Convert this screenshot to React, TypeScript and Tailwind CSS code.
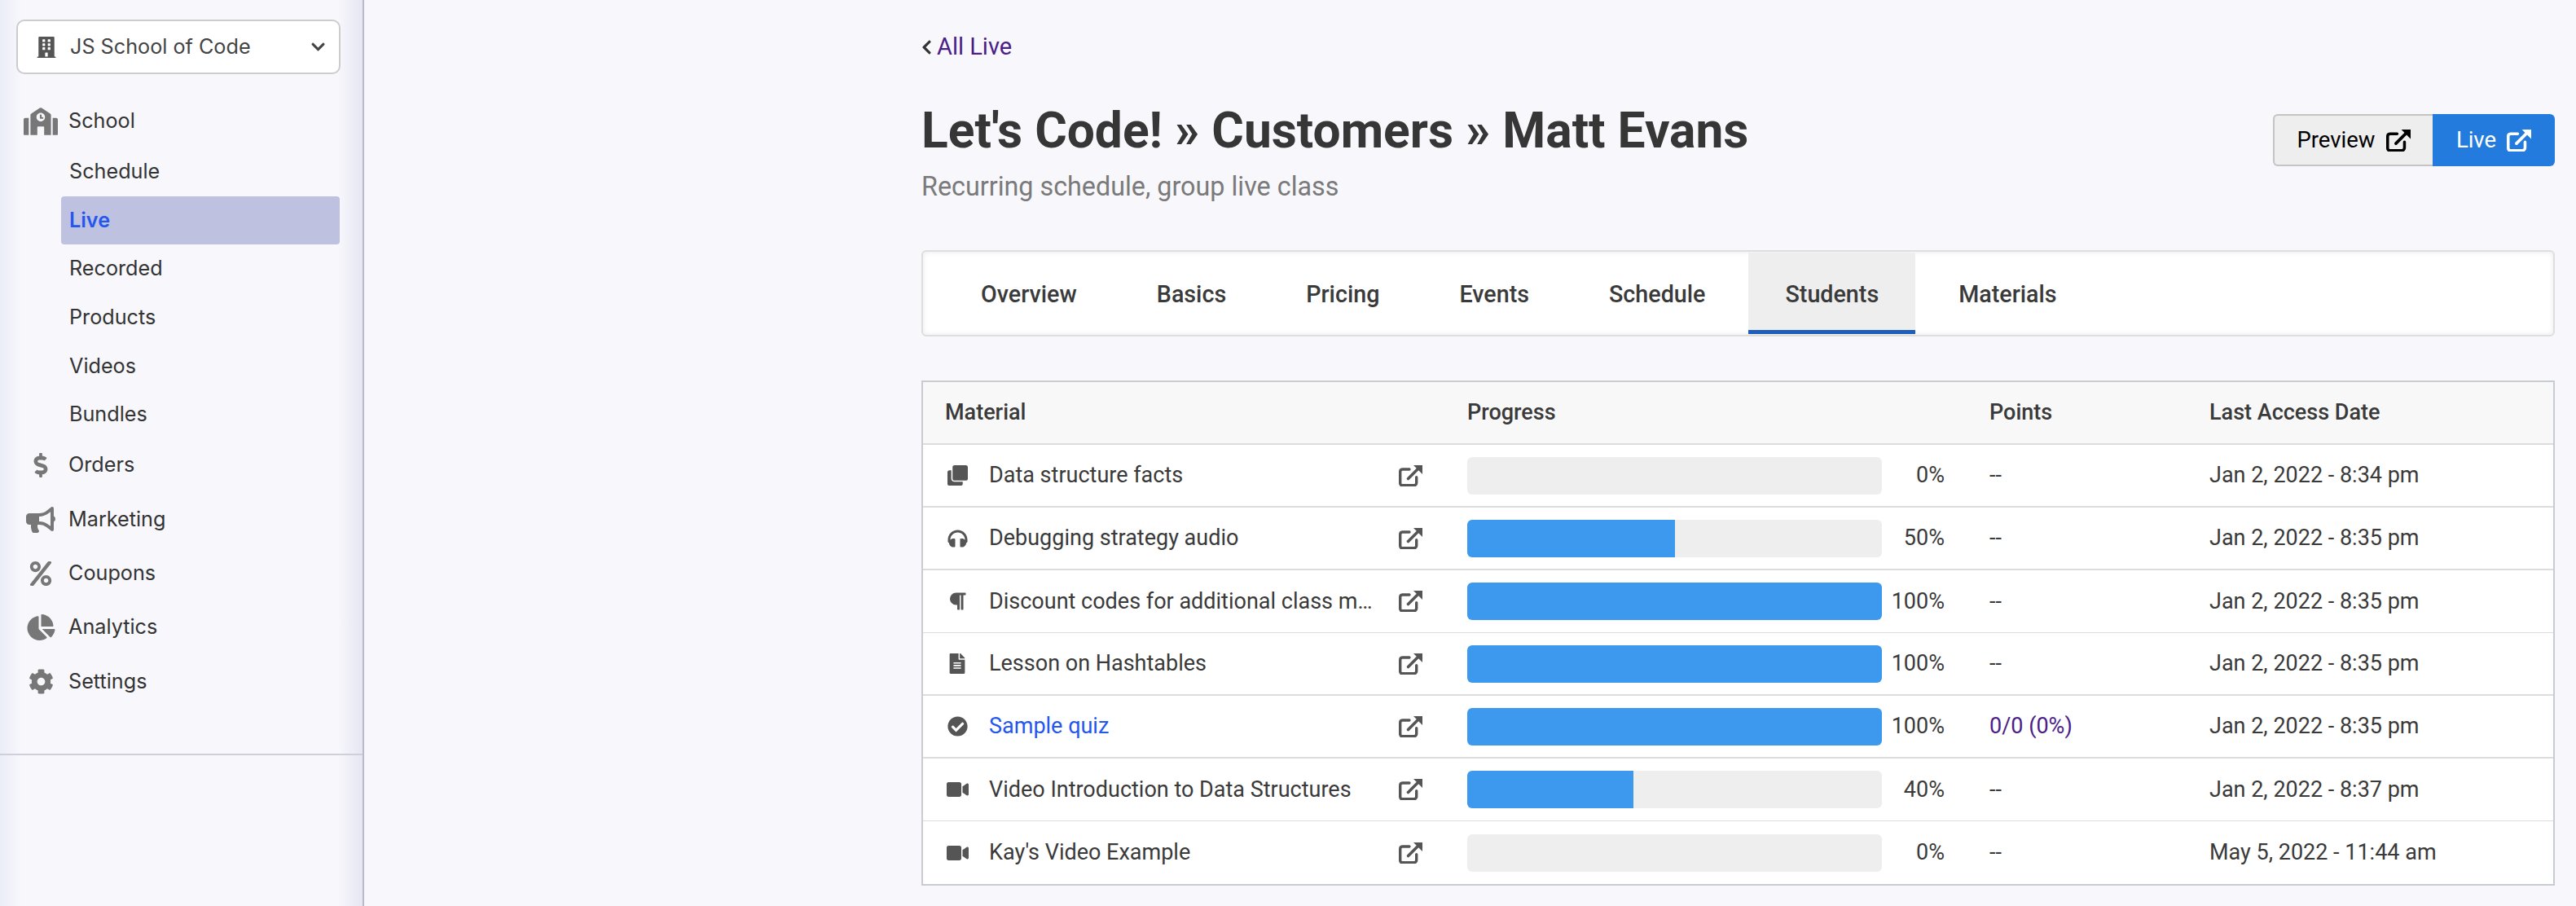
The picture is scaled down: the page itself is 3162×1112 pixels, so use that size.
import type { ReactNode } from "react";
import {
  FaBuilding,
  FaBullhorn,
  FaChartPie,
  FaCheckCircle,
  FaChevronDown,
  FaChevronLeft,
  FaClone,
  FaCog,
  FaDollarSign,
  FaFileAlt,
  FaHeadphones,
  FaParagraph,
  FaPercent,
  FaSchool,
  FaVideo,
} from "react-icons/fa";

function ExternalLink({ className }: { className: string }) {
  return (
    <svg viewBox="0 0 29 26" className={className} fill="none" stroke="currentColor">
      <path
        d="M13 5H4.500A3 3 0 0 0 1.700 8v14.300a2.500 2.500 0 0 0 2.500 2.500h14.500a3 3 0 0 0 3-3v-7"
        strokeWidth="3.400"
        strokeLinecap="round"
      />
      <path d="M11.500 16.500 25 3" strokeWidth="3.600" strokeLinecap="round" />
      <path d="M18 0h11v11z" fill="currentColor" stroke="none" />
    </svg>
  );
}

const schoolLinks = ["Schedule", "Live", "Recorded", "Products", "Videos", "Bundles"];

const sideLinks = [
  { label: "Orders", icon: <FaDollarSign className="h-[30px] w-[30px]" /> },
  { label: "Marketing", icon: <FaBullhorn className="h-[32px] w-[36px]" /> },
  { label: "Coupons", icon: <FaPercent className="h-[30px] w-[30px]" /> },
  { label: "Analytics", icon: <FaChartPie className="h-[32px] w-[35px]" /> },
  { label: "Settings", icon: <FaCog className="h-[31px] w-[31px]" /> },
];

const tabs = ["Overview", "Basics", "Pricing", "Events", "Schedule", "Students", "Materials"];

type Row = {
  title: string;
  icon: ReactNode;
  progress: number;
  points: string;
  date: string;
  thin?: boolean;
};

const rows: Row[] = [
  { title: "Data structure facts", icon: <FaClone className="h-[25px] w-[25px]" />, progress: 0, points: "--", date: "Jan 2, 2022 - 8:34 pm" },
  { title: "Debugging strategy audio", icon: <FaHeadphones className="h-[24px] w-[25px]" />, progress: 50, points: "--", date: "Jan 2, 2022 - 8:35 pm" },
  { title: "Discount codes for additional class materials", icon: <FaParagraph className="h-[24px] w-[22px]" />, progress: 100, points: "--", date: "Jan 2, 2022 - 8:35 pm", thin: true },
  { title: "Lesson on Hashtables", icon: <FaFileAlt className="h-[25px] w-[20px]" />, progress: 100, points: "--", date: "Jan 2, 2022 - 8:35 pm" },
  { title: "Sample quiz", icon: <FaCheckCircle className="h-[25px] w-[25px]" />, progress: 100, points: "0/0 (0%)", date: "Jan 2, 2022 - 8:35 pm" },
  { title: "Video Introduction to Data Structures", icon: <FaVideo className="h-[24px] w-[29px]" />, progress: 40, points: "--", date: "Jan 2, 2022 - 8:37 pm", thin: true },
  { title: "Kay's Video Example", icon: <FaVideo className="h-[24px] w-[29px]" />, progress: 0, points: "--", date: "May 5, 2022 - 11:44 am", thin: true },
];

function Sidebar() {
  return (
    <aside className="flex h-[1112px] w-[447px] shrink-0 flex-col border-r-2 border-[#b9b9cc] bg-[linear-gradient(90deg,#ebedf7_0,#f7f7fc_26px,#f7f7fc_calc(100%-30px),#e6e6f3_100%)] font-['Inter',sans-serif] text-[25.200px] text-[#333]">
      <div className="ml-[20px] mt-[24px] flex h-[67px] w-[398px] items-center rounded-[10px] border-2 border-[#ccc] bg-white pl-[23px] pr-[16px] text-[#555]">
        <FaBuilding className="h-[26px] w-[24px]" />
        <span className="ml-[17px] flex-1 text-[#444]">JS School of Code</span>
        <FaChevronDown className="h-[19px] w-[19px] text-[#444]" />
      </div>

      <div className="mt-[26px] flex h-[64px] items-center">
        <span className="flex w-[84px] justify-center pl-[16px] text-[#777]">
          <FaSchool className="h-[34px] w-[42px]" />
        </span>
        <span>School</span>
      </div>
      <div className="flex flex-col">
        {schoolLinks.map((link) => (
          <div key={link} className={`ml-[75px] flex h-[59.700px] w-[342px] items-center pl-[10px] ${link === "Live" ? "rounded-[4px] bg-[#bec1e0] font-semibold text-[#2457ef]" : ""}`}>
            {link}
          </div>
        ))}
      </div>

      <div className="-mt-[1px] flex flex-col">
        {sideLinks.map((link) => (
          <div key={link.label} className="flex h-[66.300px] items-center">
            <span className="flex w-[84px] justify-center pl-[16px] text-[#777]">{link.icon}</span>
            <span>{link.label}</span>
          </div>
        ))}
      </div>

      <div className="mt-[55px] h-[2px] w-full bg-[#cfcfda]" />
    </aside>
  );
}

function Progress({ value }: { value: number }) {
  return (
    <div className="flex items-center">
      <div className="h-[46px] w-[509px] overflow-hidden rounded-[6px] bg-[#eeeeee]">
        <div className="h-full bg-[#3d99ee]" style={{ width: `${value}%` }} />
      </div>
      <span className="w-[77px] text-right">{value}%</span>
    </div>
  );
}

export default function App() {
  return (
    <div className="flex h-[1112px] w-[3162px] overflow-hidden bg-[#f7f7fc] font-['Roboto',sans-serif] text-[#3a3a3a]">
      <Sidebar />
      <main className="flex-1 pl-[684px] pr-[26px]">
        <a className="mt-[40px] flex h-[36px] items-center text-[29px] text-[#4b1d87]">
          <FaChevronLeft className="mr-[6px] h-[20px] w-[13px] text-[#333]" />
          All Live
        </a>

        <div className="mt-[50px] flex items-start justify-between">
          <div>
            <h1 className="text-[60.500px] font-bold leading-[70px] text-[#363636]">Let's Code! » Customers » Matt Evans</h1>
            <p className="mt-[13px] text-[32.300px] leading-[40px] text-[#7a7a7a]">Recurring schedule, group live class</p>
          </div>
          <div className="mt-[14px] flex h-[64px] text-[27.500px]">
            <a className="flex w-[196px] items-center justify-center gap-[13px] rounded-l-[6px] border-2 border-r-0 border-[#c4c4c4] bg-[#eeeeee] text-black">
              Preview
              <ExternalLink className="h-[27px] w-[30px]" />
            </a>
            <a className="flex w-[150px] items-center justify-center gap-[13px] rounded-r-[6px] bg-[#237cdd] text-white">
              Live
              <ExternalLink className="h-[27px] w-[30px]" />
            </a>
          </div>
        </div>

        <nav className="mt-[58px] flex h-[106px] gap-[8px] rounded-[6px] border-2 border-[#dedede] bg-white pl-[26px] pr-[2px] pt-[1px] text-[28.700px] font-medium shadow-[inset_0_0_6px_#e8e8e8]">
          {tabs.map((tab) => (
            <div key={tab} className={`flex h-[100px] items-center px-[45px] ${tab === "Students" ? "border-b-[5px] border-[#1d5fbb] bg-[#eeeeee] pt-[9px]" : "pt-[4px]"}`}>
              {tab}
            </div>
          ))}
        </nav>

        <section className="mt-[54px] border-2 border-[#c8ccd0] bg-white text-[27px]">
          <div className="grid h-[77px] grid-cols-[668px_641px_270px_1fr] items-center border-b-2 border-[#dcdcdc] bg-[#f8f8f8] font-medium">
            <div className="pl-[27px]">Material</div>
            <div>Progress</div>
            <div>Points</div>
            <div>Last Access Date</div>
          </div>
          {rows.map((row, i) => (
            <div
              key={row.title}
              className={`grid h-[77px] grid-cols-[668px_641px_270px_1fr] items-center border-[#dcdcdc] ${i === rows.length - 1 ? "" : row.thin ? "border-b" : "border-b-2"}`}
            >
              <div className="flex items-center pl-[27px]">
                <span className="flex w-[30px] justify-center text-[#555]">{row.icon}</span>
                <span className={`ml-[24px] w-[474px] truncate ${row.title === "Sample quiz" ? "text-[#2457ef]" : ""}`}>{row.title}</span>
                <ExternalLink className="ml-[29px] h-[26px] w-[29px] text-[#555]" />
              </div>
              <Progress value={row.progress} />
              <div className={row.points !== "--" ? "text-[#4b1d87]" : ""}>{row.points}</div>
              <div>{row.date}</div>
            </div>
          ))}
        </section>
      </main>
    </div>
  );
}
